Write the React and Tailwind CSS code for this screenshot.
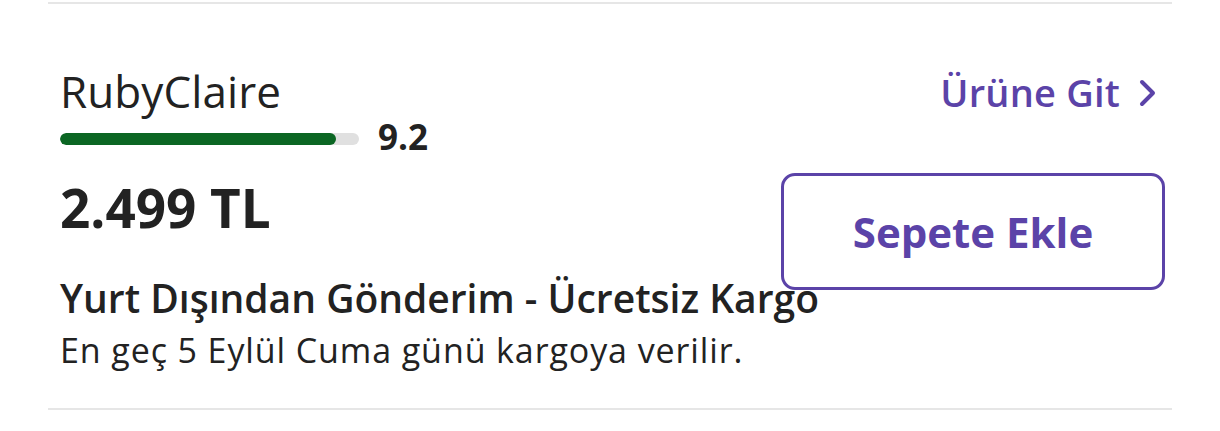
import React from "react";

export default function App() {
  const font = { fontFamily: '"Open Sans", "Noto Sans", sans-serif' };
  return (
    <div className="w-[1220px] h-[431px] bg-white overflow-hidden" style={font}>
      <div className="mx-[48px] mt-[2px] border-t-2 border-b-2 border-[#e6e6e6] pl-[12px] pr-[7px] pt-[65px] pb-[41px] relative text-[#222222]">
        <div className="flex items-start justify-between">
          <div className="text-[44px] leading-[44px] font-medium tracking-[0.1px]">RubyClaire</div>
          <a className="flex items-center gap-[18px] text-[38px] leading-[38px] font-semibold text-[#5b43a8] mt-[4px] mr-[7px] tracking-[0.2px]">
            <span>Ürüne Git</span>
            <svg width="20" height="30" viewBox="0 0 20 30" className="mt-[2px]">
              <path d="M4 4 L15 15 L4 26" fill="none" stroke="#5b43a8" strokeWidth="4" strokeLinecap="round" strokeLinejoin="round" />
            </svg>
          </a>
        </div>
        <div className="flex items-center mt-[6px] gap-[19px]">
          <div className="w-[299px] h-[12px] rounded-full bg-[#e0e0e0] overflow-hidden mt-[5px]">
            <div className="h-full w-[276px] rounded-full bg-[#0b6623]" />
          </div>
          <div className="text-[35px] leading-[35px] font-bold">9.2</div>
        </div>
        <div className="mt-[27px] text-[53px] leading-[53px] font-bold">2.499 TL</div>
        <div className="mt-[44px] text-[39px] leading-[39px] font-semibold">Yurt Dışından Gönderim - Ücretsiz Kargo</div>
        <div className="mt-[16px] text-[34px] leading-[34px] tracking-[0.9px]">En geç 5 Eylül Cuma günü kargoya verilir.</div>
        <button className="absolute right-[7px] top-[169px] w-[384px] h-[117px] rounded-[14px] border-[3px] border-[#5b43a8] bg-white text-[42px] font-bold text-[#5b43a8] flex items-center justify-center">
          Sepete Ekle
        </button>
      </div>
    </div>
  );
}
